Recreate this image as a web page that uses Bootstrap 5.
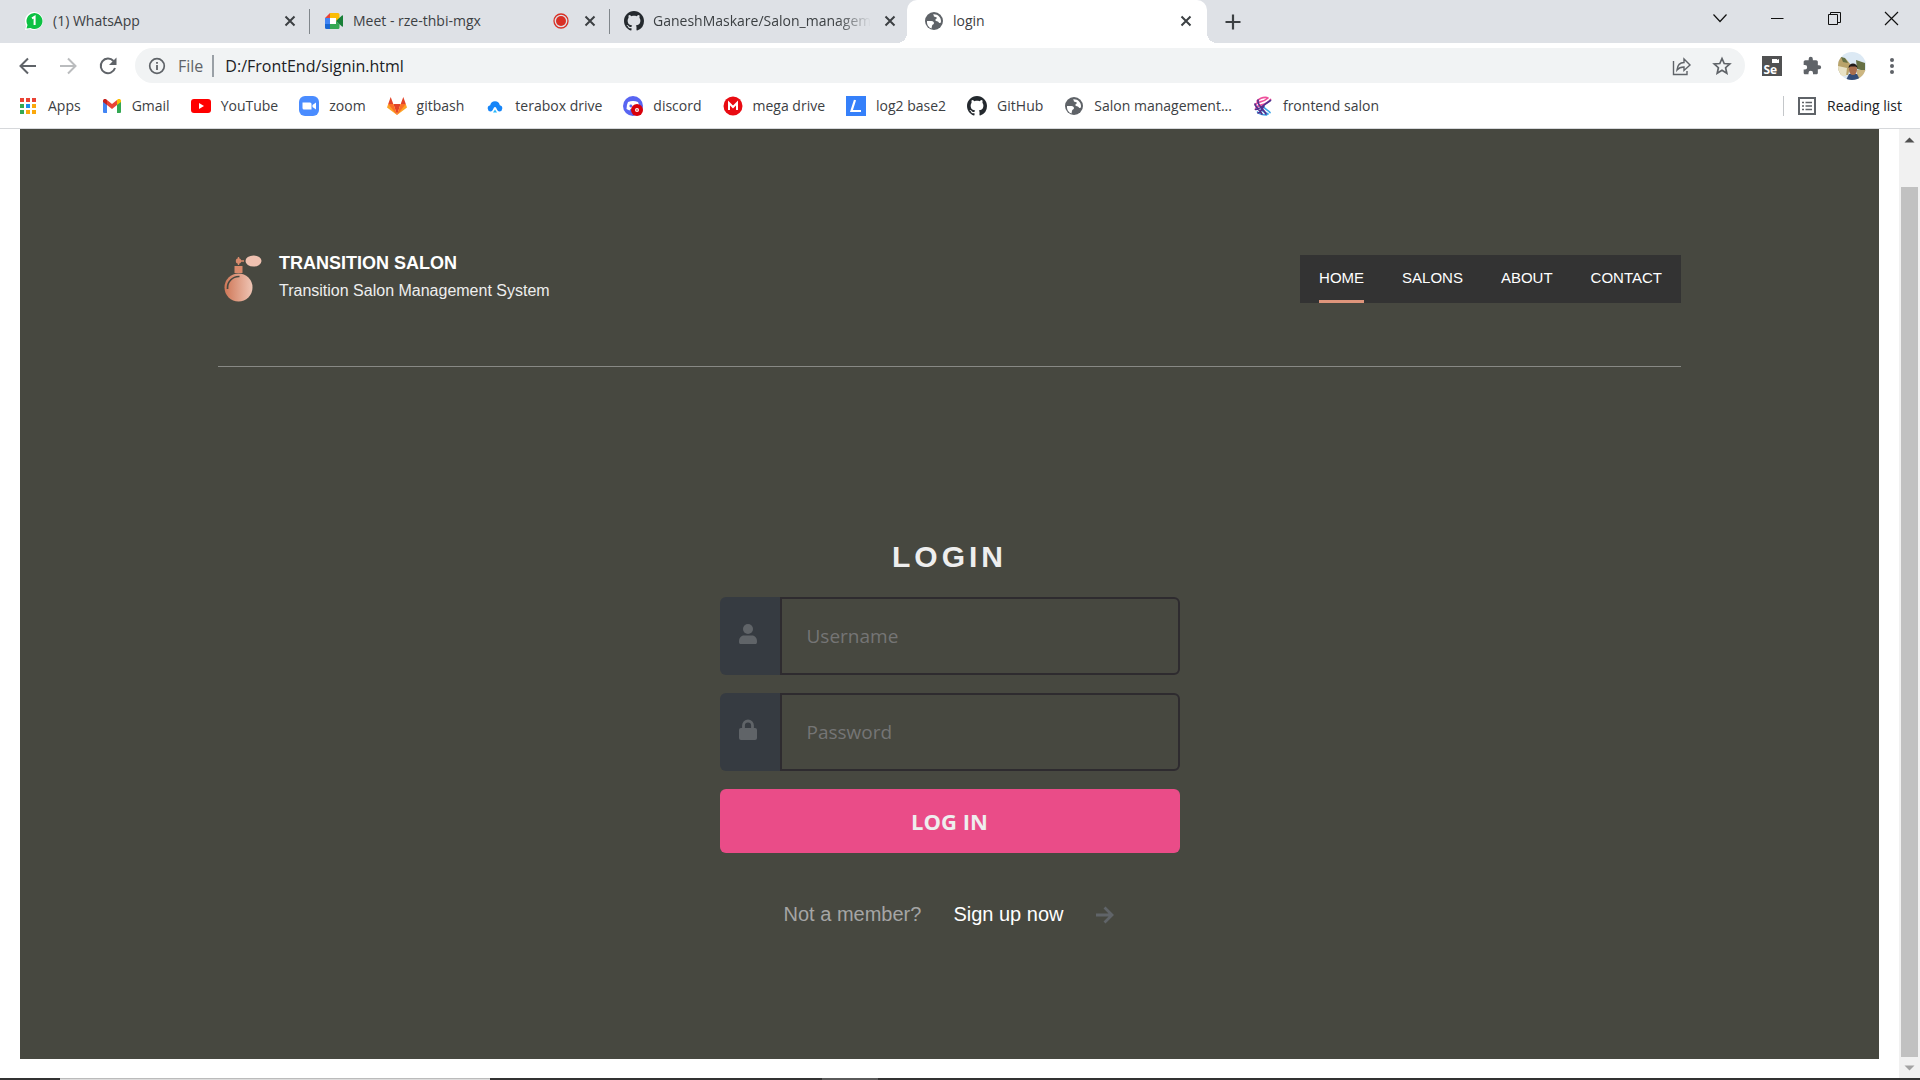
<!DOCTYPE html>
<html lang="en">
<head>
<meta charset="utf-8">
<meta name="viewport" content="width=device-width, initial-scale=1">
<title>login</title>
<link rel="stylesheet" href="https://cdn.jsdelivr.net/npm/bootstrap@5.3.0/dist/css/bootstrap.min.css">
<style>
  body { font-family: "Open Sans", sans-serif; font-size: 14px; line-height: 20px; color: #3c4043; background: #fff; }
  button { font: inherit; color: inherit; }
  svg { display: block; flex: none; }
  .plain-btn { background: none; border: 0; padding: 0; width: 20px; height: 20px; flex: none; }
  .ic { width: 20px; height: 20px; }

  .tab-strip { height: 43px; background: #dee1e6; padding-left: 7px; }
  .browser-tab { width: 300px; padding: 0 7px 2px 17px; gap: 9px; position: relative; }
  .tab-sep::after { content: ""; position: absolute; right: -3px; top: 9px; width: 1px; height: 25px; background: #80868b; }
  .tab-name { flex: 1; min-width: 0; overflow: hidden; white-space: nowrap; }
  .fade-end { -webkit-mask-image: linear-gradient(to left, transparent, #000 34px); mask-image: linear-gradient(to left, transparent, #000 34px); }
  .tab-front { background: #fff; border-radius: 10px 10px 0 0; padding-right: 11px; }
  .tab-front::before, .tab-front::after { content: ""; position: absolute; bottom: 0; width: 10px; height: 10px; }
  .tab-front::before { left: -10px; background: radial-gradient(circle at 0 0, #dee1e6 10px, #fff 10px); }
  .tab-front::after { right: -10px; background: radial-gradient(circle at 100% 0, #dee1e6 10px, #fff 10px); }
  .win-controls { gap: 37px; padding: 0 19px 7px 0; color: #111; }

  .tool-row { height: 45px; padding: 0 18px; gap: 20px; color: #5f6368; }
  .omnibox { height: 35px; border-radius: 18px; background: #f1f3f4; padding: 0 13px 0 12px; margin: 0 -3px; }
  .omnibox input { border: 0; background: none; padding: 0; outline: 0; color: #202124; font-size: 16px; line-height: 22px; }
  .scheme { font-size: 16px; line-height: 22px; padding: 0 9px 0 11px; border-right: 2px solid #9aa0a6; margin-right: 11px; }
  .avatar { width: 28px; height: 28px; margin: 0 -4px; }

  .mark-row { height: 41px; padding: 0 18px 5px; border-bottom: 1px solid #d6d8db; }
  .mark-row ul { gap: 21px; }
  .mark-link, .mark-row .reading { display: flex; align-items: center; gap: 10px; color: #3c4043; text-decoration: none; white-space: nowrap; background: none; border: 0; padding: 0; }
  .mark-row .reading { color: #202124; border-left: 1px solid #c4c7ca; padding-left: 13px; height: 20px; }

  .sheet { margin: 0 20px 19px; background: #474840; font-family: "Liberation Sans", Arial, sans-serif; }
  .inner { max-width: 1463px; }
  .site-head { padding: 121px 0 62px; border-bottom: 1px solid #888985; }
  .brand-box { color: #fff; text-decoration: none; padding-left: 6px; gap: 17px; }
  .brand-logo { width: 38px; height: 48px; margin-top: 5px; }
  .brand-name { font-size: 18px; line-height: 27px; font-weight: 700; }
  .brand-sub { font-size: 16px; line-height: 27px; color: #eee; }
  .site-nav { background: #333; margin-top: 5px; padding: 0 19px; gap: 38px; font-size: 15px; line-height: 45px; }
  .site-nav a { color: #fff; text-decoration: none; display: block; border-bottom: 3px solid transparent; }
  .site-nav a.here { border-color: #df957b; }

  .login-box { max-width: 460px; padding-top: 170px; color: #eee; }
  .login-title { font-size: 30px; line-height: 40px; letter-spacing: 4px; font-weight: 700; margin-bottom: 20px; }
  .field { height: 78px; margin-bottom: 18px; }
  .field label { width: 60px; background: #363b41; border-radius: 6px 0 0 6px; padding: 0 3px 4px 0; color: #606468; }
  .field input { border: 2px solid #2e2b2f; border-radius: 0 6px 6px 0; background: transparent; padding: 0 25px; min-width: 0; color: #eee; font: 19px/28px "Open Sans", sans-serif; }
  .field input::placeholder { color: #757575; opacity: 1; }
  .go-btn, .go-btn:hover { background: #ea4c88; color: #eee; border: 0; border-radius: 6px; height: 64px; font: 700 22px/28px "Open Sans", sans-serif; }
  .join { gap: 32px; font-size: 20px; line-height: 30px; margin: 46px 0 0; color: #a5a5a5; }
  .join a { color: #fff; text-decoration: none; gap: 32px; }

  .scroll-rail { width: 21px; background: #f1f1f1; }
  .rail-end { height: 21px; width: 21px; }
  .rail-thumb { flex: 1; width: 17px; background: #c1c1c1; margin: 37px auto 0; }
  .os-bar { height: 2px; background: #333; padding-left: 60px; }
  .os-app { width: 430px; background: #ddd; border-top: 1px solid #bbb; }
  .os-item { width: 56px; margin-left: 332px; background: #5a5a5a; }
</style>
<script src="https://cdn.jsdelivr.net/npm/bootstrap@5.3.0/dist/js/bootstrap.bundle.min.js"></script>
</head>
<body class="d-flex flex-column min-vh-100">

<svg width="0" height="0" class="position-absolute" aria-hidden="true">
  <symbol id="x" viewBox="0 0 20 20"><path d="M5.500 5.500l9 9M14.500 5.500l-9 9" stroke="#3c4043" stroke-width="2" fill="none"/></symbol>
  <symbol id="octo" viewBox="0 0 16 16"><path fill="#24292e" d="M8 0C3.580 0 0 3.580 0 8c0 3.540 2.290 6.530 5.470 7.590.4.070.55-.17.55-.38 0-.19-.01-.82-.01-1.490-2.010.37-2.530-.49-2.690-.94-.09-.23-.48-.94-.82-1.130-.28-.15-.68-.52-.01-.53.63-.01 1.080.58 1.230.82.72 1.210 1.870.87 2.330.66.07-.52.28-.87.51-1.070-1.780-.2-3.640-.89-3.640-3.950 0-.87.31-1.590.82-2.150-.08-.2-.36-1.020.08-2.120 0 0 .67-.21 2.200.82.64-.18 1.320-.27 2-.27s1.360.09 2 .27c1.530-1.040 2.200-.82 2.200-.82.44 1.100.16 1.920.08 2.120.51.56.82 1.270.82 2.150 0 3.070-1.870 3.750-3.650 3.950.29.25.54.73.54 1.480 0 1.070-.01 1.930-.01 2.200 0 .21.15.46.55.38A8.010 8.010 0 0 0 16 8c0-4.420-3.580-8-8-8z"/></symbol>
  <symbol id="globe" viewBox="0 0 20 20"><circle cx="10" cy="10" r="9" fill="#5f6368"/><path d="M3 10c3 0 7-.5 7 2 0 1.500-2 1.500-2 3l-.5 2.500C4.500 16.500 2.700 13.500 3 10zM9 3.200c1 .5.500 1.700 1 2.300s2.500 0 2.800 1.300-1.800 1.400-1.500 2.400 2.700.8 3.200 1.700.8 1.500 1.700 1c.6-.4.800-1 .8-2 0-3.500-3-7.200-8-6.700z" fill="#fff"/></symbol>
</svg>

<header>
  <div class="tab-strip d-flex">
    <div class="browser-tab tab-sep d-flex align-items-center">
      <svg class="ic" viewBox="0 0 20 20"><path d="M1 19l1.200-4.500A9 9 0 1 1 6 18z" fill="#fff"/><path d="M2.500 17.500l1-3.500A8 8 0 1 1 6.500 17z" fill="#0cc143"/><path d="M8 7.300L10.600 5.800V14" fill="none" stroke="#fff" stroke-width="2"/></svg>
      <span class="tab-name">(1) WhatsApp</span>
      <button class="plain-btn" aria-label="Close tab"><svg class="ic"><use href="#x"/></svg></button>
    </div>
    <div class="browser-tab tab-sep d-flex align-items-center">
      <svg class="ic" viewBox="0 0 20 20"><path d="M1 7l5-5v5z" fill="#ea4335"/><path d="M6 2h8q1.500 0 1.500 1.500V8L12 10V7H6z" fill="#fbbc04"/><path d="M1 7h5v6H1z" fill="#4285f4"/><path d="M1 13h5v5H2.500Q1 18 1 16.500z" fill="#1967d2"/><path d="M6 13h6v-3l3.500 3v3.500Q15.500 18 14 18H6z" fill="#34a853"/><path d="M12 10l6-5.500q1-.5 1 .5v10q0 1-1 .5z" fill="#188038"/><path d="M6 7h6v6H6z" fill="#fff"/></svg>
      <span class="tab-name">Meet - rze-thbi-mgx</span>
      <svg class="ic" viewBox="0 0 20 20"><circle cx="10" cy="10" r="7" fill="none" stroke="#d93025" stroke-width="1.300"/><circle cx="10" cy="10" r="5" fill="#d93025"/></svg>
      <button class="plain-btn" aria-label="Close tab"><svg class="ic"><use href="#x"/></svg></button>
    </div>
    <div class="browser-tab d-flex align-items-center">
      <svg class="ic"><use href="#octo"/></svg>
      <span class="tab-name fade-end">GaneshMaskare/Salon_managem</span>
      <button class="plain-btn" aria-label="Close tab"><svg class="ic"><use href="#x"/></svg></button>
    </div>
    <div class="browser-tab tab-front d-flex align-items-center">
      <svg class="ic"><use href="#globe"/></svg>
      <span class="tab-name">login</span>
      <button class="plain-btn" aria-label="Close tab"><svg class="ic"><use href="#x"/></svg></button>
    </div>
    <button class="plain-btn align-self-center ms-3 me-auto" aria-label="New tab"><svg class="ic" viewBox="0 0 20 20"><path d="M10 2.500v15M2.500 10h15" stroke="#3c4043" stroke-width="2.200"/></svg></button>
    <div class="win-controls d-flex align-items-center">
      <button class="plain-btn" aria-label="Search tabs"><svg class="ic" viewBox="0 0 20 20"><path d="M3.500 6.500l6.500 7 6.500-7" fill="none" stroke="currentColor" stroke-width="1.200"/></svg></button>
      <button class="plain-btn" aria-label="Minimize"><svg class="ic" viewBox="0 0 20 20"><path d="M4 10.500h12.500" stroke="currentColor"/></svg></button>
      <button class="plain-btn" aria-label="Restore"><svg class="ic" viewBox="0 0 20 20"><path d="M4.500 6.500h9v10h-9zM6.500 6V4.500h10v10H14" fill="none" stroke="currentColor"/></svg></button>
      <button class="plain-btn" aria-label="Close"><svg class="ic" viewBox="0 0 20 20"><path d="M4 4l13 13M17 4L4 17" stroke="currentColor" stroke-width="1.200"/></svg></button>
    </div>
  </div>

  <div class="tool-row d-flex align-items-center">
    <button class="plain-btn" aria-label="Back"><svg class="ic" viewBox="0 0 20 20"><path d="M18 10H3M10 2.500L2.500 10l7.500 7.500" fill="none" stroke="#5f6368" stroke-width="2"/></svg></button>
    <button class="plain-btn" aria-label="Forward"><svg class="ic" viewBox="0 0 20 20"><path d="M2 10h15M10 2.500l7.500 7.500-7.500 7.500" fill="none" stroke="#babcbe" stroke-width="2"/></svg></button>
    <button class="plain-btn" aria-label="Reload"><svg class="ic" viewBox="0 0 20 20"><path d="M15.500 5A7.300 7.300 0 1 0 17 12" fill="none" stroke="#5f6368" stroke-width="2"/><path d="M18.500 1.500V9H11z" fill="#5f6368"/></svg></button>
    <div class="omnibox d-flex align-items-center flex-grow-1">
      <svg class="ic" viewBox="0 0 20 20"><circle cx="10" cy="10" r="7.300" fill="none" stroke="#5f6368" stroke-width="1.700"/><path d="M10 9v5M10 6v1.800" stroke="#5f6368" stroke-width="1.800"/></svg>
      <span class="scheme">File</span>
      <input class="flex-grow-1" type="text" value="D:/FrontEnd/signin.html" aria-label="Address">
      <button class="plain-btn me-3" aria-label="Share"><svg class="ic" viewBox="0 0 20 20"><path d="M1.500 5v13.500H15V15M5 14c.5-5 3-7.500 7-7.500V3l6 6-6 5.500V11c-3 0-5 .6-7 3z" fill="none" stroke="#5f6368" stroke-width="1.400"/></svg></button>
      <button class="plain-btn ms-1" aria-label="Bookmark"><svg class="ic" viewBox="0 0 20 20"><path d="M10 2.500l2.200 5 5.600.5-4.200 3.700 1.200 5.500-4.800-2.900-4.800 2.900 1.200-5.500L2.200 8l5.600-.5z" fill="none" stroke="#5f6368" stroke-width="1.700"/></svg></button>
    </div>
    <button class="plain-btn" aria-label="Selenium"><svg class="ic" viewBox="0 0 20 20"><path d="M0 0h20v20H0z" fill="#505152"/><path d="M10 3h5v1l2-1v4H10z" fill="#fff"/><text x="1.500" y="17.500" font-size="12" font-weight="700" fill="#fff" font-family="Open Sans, sans-serif">Se</text></svg></button>
    <button class="plain-btn" aria-label="Extensions"><svg class="ic" viewBox="0 0 24 24"><path fill="#5f6368" d="M20.500 11H19V7c0-1.100-.9-2-2-2h-4V3.500a2.500 2.500 0 0 0-5 0V5H4c-1.100 0-2 .9-2 2v3.800h1.500a2.700 2.700 0 0 1 0 5.400H2V20c0 1.100.9 2 2 2h3.800v-1.500a2.700 2.700 0 0 1 5.400 0V22H17c1.100 0 2-.9 2-2v-4h1.500a2.500 2.500 0 0 0 0-5z"/></svg></button>
    <button class="plain-btn avatar" aria-label="Profile"><svg width="28" height="28" viewBox="0 0 28 28"><clipPath id="av"><circle cx="14" cy="14" r="14"/></clipPath><g clip-path="url(#av)"><path fill="#dce9f4" d="M0 0h28v28H0z"/><path fill="#b9a36a" d="M0 4l8 3 5 6-3 10H0z"/><path fill="#e8e2c6" d="M0 14l9 2-1 8H0z"/><path fill="#667044" d="M3 5l4 1 3 5-5-1zM18 8l9 3v8l-8-2z"/><path fill="#ccb681" d="M19 18h9v10h-9z"/><path fill="#344d78" d="M8 28l3-6h8l3 6z"/><ellipse cx="15" cy="17.500" rx="4" ry="5.500" fill="#a96e4d"/><path fill="#211b1b" d="M10.500 16c0-6 9-6 9 0l-2-1.500h-5z"/></g></svg></button>
    <button class="plain-btn" aria-label="Menu"><svg class="ic" viewBox="0 0 20 20" fill="#5f6368"><circle cx="10" cy="4" r="2"/><circle cx="10" cy="10" r="2"/><circle cx="10" cy="16" r="2"/></svg></button>
  </div>

  <nav class="mark-row d-flex align-items-center justify-content-between" aria-label="Bookmarks">
    <ul class="list-unstyled d-flex m-0">
      <li><a class="mark-link" href="#"><svg class="ic" viewBox="0 0 20 20"><path fill="#ea4335" d="M2 2h4v4H2zM8 2h4v4H8zM14 2h4v4h-4z"/><path fill="#34a853" d="M2 8h4v4H2zM2 14h4v4H2z"/><path fill="#1a8cf0" d="M8 8h4v4H8z"/><path fill="#fba80c" d="M14 8h4v4h-4zM8 14h4v4H8zM14 14h4v4h-4z"/></svg>Apps</a></li>
      <li><a class="mark-link" href="#"><svg class="ic" viewBox="0 0 20 20"><path d="M1 5l4 3v9H2q-1 0-1-1z" fill="#4285f4"/><path d="M15 8l4-3v11q0 1-1 1h-3z" fill="#34a853"/><path d="M5 4l5 4 5-4v5l-5 4-5-4z" fill="#ea4335"/><path d="M1 6V5c0-2 2-2.500 3.500-1.500L5 4v5z" fill="#c5221f"/><path d="M19 6V5c0-2-2-2.500-3.500-1.500L15 4v5z" fill="#fbbc04"/></svg>Gmail</a></li>
      <li><a class="mark-link" href="#"><svg class="ic" viewBox="0 0 20 20"><rect y="3" width="20" height="14" rx="3" fill="#f00"/><path d="M8 7l5 3-5 3z" fill="#fff"/></svg>YouTube</a></li>
      <li><a class="mark-link" href="#"><svg class="ic" viewBox="0 0 20 20"><rect width="20" height="20" rx="6" fill="#4a8cff"/><path d="M3.500 6.500H11q1.500 0 1.500 1.500v5.500H5Q3.500 13.500 3.500 12zM13.500 9l3.500-2.500v7L13.500 11z" fill="#fff"/></svg>zoom</a></li>
      <li><a class="mark-link" href="#"><svg class="ic" viewBox="0 0 20 20"><path d="M10 19L6.300 8h7.400z" fill="#e24329"/><path d="M10 19L0 11.500 1.200 8h5.100z" fill="#fca326"/><path d="M10 19l10-7.500L18.800 8h-5.100z" fill="#fca326"/><path d="M10 19L1.200 8h5.100zM10 19l8.800-11h-5.100z" fill="#fc6d26"/><path d="M1.200 8l2.500-7 2.600 7zM18.800 8l-2.500-7-2.600 7z" fill="#e24329"/></svg>gitbash</a></li>
      <li><a class="mark-link" href="#"><svg class="ic" viewBox="0 0 20 20"><path d="M5.500 15.500a3.200 3.200 0 0 1-.3-6.300 4.900 4.900 0 0 1 9.600 0 3.200 3.200 0 0 1-.3 6.300c-3 0-2.500-4.500-4.500-4.500s-1.500 4.500-4.500 4.500" fill="#1685f8"/><path d="M8 16.500l2-3 2 3z" fill="#26b8fa"/></svg>terabox drive</a></li>
      <li><a class="mark-link" href="#"><svg class="ic" viewBox="0 0 20 20"><circle cx="10" cy="10" r="10" fill="#5865f2"/><path d="M5 6q5-2 10 0 2 4 1.500 7l-3 1.500-1-1.500h-5l-1 1.500-3-1.500Q3.500 9 5 6z" fill="#fff"/><circle cx="7.800" cy="10" r="1.400" fill="#5865f2"/><circle cx="14" cy="14" r="6" fill="#d8000c"/><circle cx="14" cy="14" r="2" fill="#fff"/><circle cx="14" cy="14" r=".8" fill="#d8000c"/></svg>discord</a></li>
      <li><a class="mark-link" href="#"><svg class="ic" viewBox="0 0 20 20"><circle cx="10" cy="10" r="9.500" fill="#e90b12"/><path d="M6 14V7l4 4 4-4v7" fill="none" stroke="#fff" stroke-width="2"/></svg>mega drive</a></li>
      <li><a class="mark-link" href="#"><svg class="ic" viewBox="0 0 20 20"><path d="M0 0h20v20H0z" fill="#3580fa"/><path d="M9 4L5.500 15H15" fill="none" stroke="#fff" stroke-width="2.200"/></svg>log2 base2</a></li>
      <li><a class="mark-link" href="#"><svg class="ic"><use href="#octo"/></svg>GitHub</a></li>
      <li><a class="mark-link" href="#"><svg class="ic"><use href="#globe"/></svg>Salon management...</a></li>
      <li><a class="mark-link" href="#"><svg class="ic" viewBox="0 0 20 20" fill="none" stroke-width="1.700" stroke-linecap="round"><path d="M4 5c3-3 6-4 10-3.500M2 9c2-4 8-2 13-7M2.500 13c2-6 10-2 15-9.500" stroke="#ee4f9b"/><path d="M4.500 16c3 3 6 3 9 3M10 10c1 3 5 4 7 6.500M8 13c1 3 4 3 7 5" stroke="#38a5e8"/><path d="M5 4c-1 6 5 8 8 14M2 8c1 4 4 5 7 10M2.500 13.500C7 13 9 10 17.500 4.500M5 17c4-1 4-5 6-7" stroke="#51318f"/></svg>frontend salon</a></li>
    </ul>
    <button class="reading"><svg class="ic" viewBox="0 0 20 20"><path d="M2 2h16v16H2z" fill="none" stroke="#5f6368" stroke-width="2"/><path d="M5 6.500h2M5 10h2M5 13.500h2M8.500 6.500H15M8.500 10H15M8.500 13.500H15" stroke="#5f6368" stroke-width="1.700"/></svg>Reading list</button>
  </nav>
</header>

<div class="d-flex flex-grow-1">
  <main class="sheet flex-grow-1">
    <div class="inner mx-auto">
      <div class="site-head d-flex justify-content-between align-items-start">
        <a class="brand-box d-flex" href="#">
          <svg class="brand-logo" viewBox="0 0 38 48"><defs><linearGradient id="pf" x1="0" x2="1"><stop offset="0" stop-color="#cf7757"/><stop offset="1" stop-color="#efc5b5"/></linearGradient></defs><circle cx="14.500" cy="32.500" r="14" fill="url(#pf)"/><path d="M3.500 34a11.500 11.500 0 0 1 12-12.500" fill="none" stroke="#474840" stroke-width="1.700"/><path d="M10.500 11h8v7h-8z" fill="#d98a6c"/><circle cx="14.500" cy="6" r="2.700" fill="#d98a6c"/><path d="M14.500 2v8M14 6h6" fill="none" stroke="#d98a6c" stroke-width="1.400"/><ellipse cx="29.500" cy="6" rx="8" ry="5.500" fill="#efc1b0"/></svg>
          <span><span class="brand-name d-block">TRANSITION SALON</span><span class="brand-sub d-block">Transition Salon Management System</span></span>
        </a>
        <nav class="site-nav d-flex" aria-label="Site">
          <a class="here" href="#">HOME</a><a href="#">SALONS</a><a href="#">ABOUT</a><a href="#">CONTACT</a>
        </nav>
      </div>
      <div class="login-box mx-auto">
        <h1 class="login-title text-center">LOGIN</h1>
        <form>
          <div class="field d-flex">
            <label class="d-flex align-items-center justify-content-center" for="user"><svg width="18" height="22" viewBox="0 0 18 22" role="img" aria-label="Username"><circle cx="9" cy="6" r="5" fill="currentColor"/><path d="M0 18.500C0 15 2 12.500 5 12.500h8c3 0 5 2.500 5 6 0 2-.5 2.500-2 2.500H2c-1.500 0-2-.5-2-2.500z" fill="currentColor"/></svg></label>
            <input class="flex-grow-1" id="user" type="text" placeholder="Username">
          </div>
          <div class="field d-flex">
            <label class="d-flex align-items-center justify-content-center" for="pass"><svg width="18" height="22" viewBox="0 0 18 22" role="img" aria-label="Password"><rect y="9" width="18" height="12" rx="2" fill="currentColor"/><path d="M4.500 10V6.500a4.500 4.500 0 0 1 9 0V10" fill="none" stroke="currentColor" stroke-width="2.800"/></svg></label>
            <input class="flex-grow-1" id="pass" type="password" placeholder="Password">
          </div>
          <button class="btn go-btn w-100" type="button">LOG IN</button>
        </form>
        <p class="join d-flex justify-content-center">Not a member? <a class="d-flex align-items-center" href="#">Sign up now <svg width="20" height="20" viewBox="0 0 20 20"><path d="M1 11h16M9.500 3.500L17 11l-7.500 7.500" fill="none" stroke="#606468" stroke-width="2.800"/></svg></a></p>
      </div>
    </div>
  </main>
  <div class="scroll-rail d-flex flex-column" aria-hidden="true">
    <svg class="rail-end" viewBox="0 0 21 21"><path d="M5.500 13.500l5-5 5 5z" fill="#505050"/></svg>
    <div class="rail-thumb"></div>
    <svg class="rail-end" viewBox="0 0 21 21"><path d="M5.500 8.500h10l-5 5z" fill="#a3a3a3"/></svg>
  </div>
</div>

<footer class="os-bar d-flex"><div class="os-app"></div><div class="os-item"></div></footer>
</body>
</html>
